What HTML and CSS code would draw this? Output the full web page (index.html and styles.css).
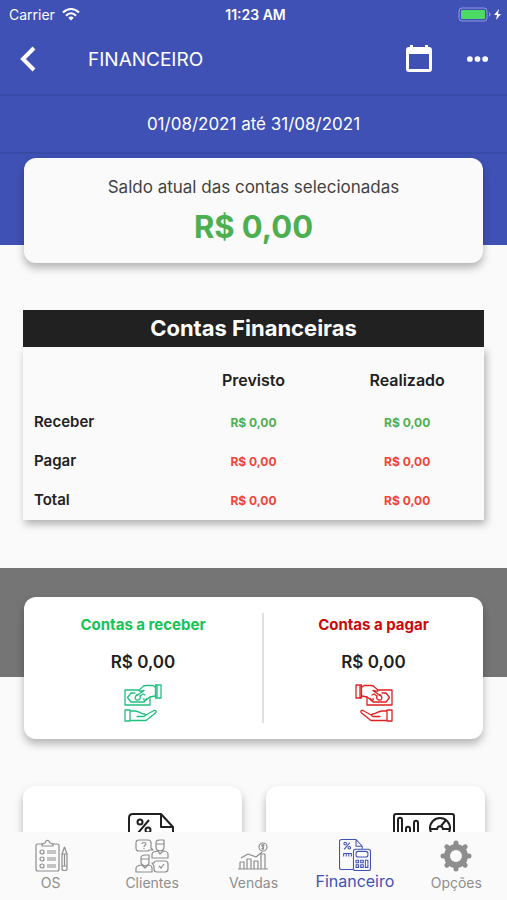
FILE: index.html
```html
<!DOCTYPE html>
<html lang="pt-BR">
<head>
    <meta charset="UTF-8">
    <meta name="viewport" content="width=device-width, initial-scale=1.0">
    <title>Financeiro</title>
    <link rel="stylesheet" href="styles.css">
</head>
<body>
    <!-- Shared icon shapes -->
    <svg class="icon-defs" aria-hidden="true">
        <symbol id="iconMoneyHands" viewBox="0 0 40 40">
            <g fill="none" stroke="currentColor" stroke-width="1.3" stroke-linejoin="round" stroke-linecap="round">
                <path d="M16 7H2v15h25v-8"/>
                <path d="M12 10H8L4.500 14.500 8 19h13l3-3.500M15 11.500c-3 .5-4 5-1 5.500 3 .5 4-2 3-4"/>
                <path d="M14 12.500l7-5c-2 0-4 1-5 .5 0-1.500 1.500-2.500 3-3.500 1-1.500 2-2 4-2h7l2 1.500M32 13l-5 1-4 3c-1 1-3 0-2-1.500M17 13l3-2 2 1"/>
                <path d="M32.500 2H38v13h-5.500zM34 2v13"/>
                <path d="M2 27h5v11H2zM7 28h5c4 0 6 3 9 3 2 0 2 2 0 2.500h-7M22 32.500l9-5c2-.500 3 1 1.500 2.500L23 37.500H7"/>
            </g>
        </symbol>
        <symbol id="iconInvoice" viewBox="0 0 62 62">
            <g fill="none" stroke="currentColor" stroke-width="2" stroke-linejoin="round">
                <path d="M28 59H5c-2 0-4-1-4-4V5c0-3 2-4 4-4h28l12 13v5M33 1v13h12"/>
                <circle cx="12" cy="9" r="2.500"/>
                <circle cx="20" cy="17" r="2.500"/>
                <path d="M21 7L10 20M9 34v-6h15v6M14 28v6M19 28v6"/>
                <rect x="28" y="20" width="33" height="41" rx="4"/>
                <rect x="33" y="24" width="23" height="11" rx="4"/>
                <path d="M33 41h5v5h-5zM42 41h5v5h-5zM51 41h5v14h-5zM33 50h5v5h-5zM42 50h5v5h-5z"/>
            </g>
        </symbol>
    </svg>

    <div class="app">
        <header>
            <div class="status-bar">
                <span class="carrier">Carrier
                    <svg width="18" height="13" viewBox="0 0 18 13" fill="none" stroke="currentColor" stroke-width="2.200">
                        <path d="M1 4.500c5-4.500 11-4.500 16 0M4 7.700c3-3 7-3 10 0"/>
                        <path d="M6.300 9.700c1.600-1.500 3.800-1.500 5.400 0L9 12.500z" fill="currentColor" stroke="none"/>
                    </svg>
                </span>
                <span class="clock">11:23 AM</span>
                <span class="battery">
                    <svg width="44" height="15" viewBox="0 0 44 15">
                        <rect x="1" y="1" width="28" height="13" rx="3" fill="none" stroke="#8f9bdc"/>
                        <rect x="3" y="3" width="24" height="9" rx="1" fill="#4cd964"/>
                        <path d="M31 5c2 1 2 4 0 5z" fill="#8f9bdc"/>
                        <path d="M41 2l-5 6h3l-1 5 5-6h-3z" fill="#fff"/>
                    </svg>
                </span>
            </div>

            <div class="app-bar">
                <button type="button" class="icon-button" aria-label="Voltar">
                    <svg width="16" height="26" viewBox="0 0 16 26" fill="none" stroke="currentColor" stroke-width="4">
                        <path d="M14 2L3 13l11 11"/>
                    </svg>
                </button>
                <h1>FINANCEIRO</h1>
                <button type="button" class="icon-button" aria-label="Calendário">
                    <svg width="26" height="28" viewBox="0 0 26 28" fill="currentColor">
                        <path fill-rule="evenodd" d="M4 0h3v2h12V0h3v2h1a3 3 0 0 1 3 3v19a3 3 0 0 1-3 3H3a3 3 0 0 1-3-3V5a3 3 0 0 1 3-3h1zM3 9v15h20V9z"/>
                    </svg>
                </button>
                <button type="button" class="icon-button" aria-label="Mais opções">
                    <svg width="21" height="6" viewBox="0 0 22 6" fill="currentColor">
                        <circle cx="3" cy="3" r="3"/>
                        <circle cx="11" cy="3" r="3"/>
                        <circle cx="19" cy="3" r="3"/>
                    </svg>
                </button>
            </div>

            <div class="period">01/08/2021 até 31/08/2021</div>
        </header>

        <main>
            <!-- Current balance -->
            <section class="balance">
                <div class="card balance-card">
                    <p>Saldo atual das contas selecionadas</p>
                    <strong>R$ 0,00</strong>
                </div>
            </section>

            <!-- Accounts table -->
            <table class="accounts">
                <caption>Contas Financeiras</caption>
                <thead>
                    <tr>
                        <td></td>
                        <th scope="col">Previsto</th>
                        <th scope="col">Realizado</th>
                    </tr>
                </thead>
                <tbody>
                    <tr>
                        <th scope="row">Receber</th>
                        <td class="positive">R$ 0,00</td>
                        <td class="positive">R$ 0,00</td>
                    </tr>
                    <tr>
                        <th scope="row">Pagar</th>
                        <td class="negative">R$ 0,00</td>
                        <td class="negative">R$ 0,00</td>
                    </tr>
                    <tr>
                        <th scope="row">Total</th>
                        <td class="negative">R$ 0,00</td>
                        <td class="negative">R$ 0,00</td>
                    </tr>
                </tbody>
            </table>

            <!-- Receivable / payable -->
            <section class="bills">
                <div class="card bills-card">
                    <div class="bill receive">
                        <h2>Contas a receber</h2>
                        <p>R$ 0,00</p>
                        <svg width="40" height="40"><use href="#iconMoneyHands"/></svg>
                    </div>
                    <div class="bill pay">
                        <h2>Contas a pagar</h2>
                        <p>R$ 0,00</p>
                        <svg class="mirrored" width="40" height="40"><use href="#iconMoneyHands"/></svg>
                    </div>
                </div>
            </section>

            <section class="shortcuts">
                <button type="button" class="card shortcut" aria-label="Lançamentos">
                    <svg width="62" height="62"><use href="#iconInvoice"/></svg>
                </button>
                <button type="button" class="card shortcut shortcut-end" aria-label="Relatórios">
                    <svg width="62" height="62" viewBox="0 0 62 62" fill="none" stroke="currentColor" stroke-width="2">
                        <rect x="1" y="1" width="60" height="44" rx="2"/>
                        <path d="M5 34V7c0-3 4-3 4 0v27M13 34V16c0-3 4-3 4 0v18M21 34V10c0-3 4-3 4 0v24M24 45v12M38 45v12M16 58h30"/>
                        <circle cx="47" cy="15" r="10"/>
                        <path d="M37 16h7M50 16h7M48 13l5-6"/>
                        <path d="M44 17c0-5 6-5 6 0"/>
                    </svg>
                </button>
            </section>
        </main>

        <nav>
            <a href="#os">
                <svg width="34" height="34" viewBox="0 0 34 34" fill="none" stroke="currentColor" stroke-width="1.200" stroke-linejoin="round">
                    <path d="M9 5H4c-1.500 0-2 1-2 2v23c0 1 .5 2 2 2h19c1.500 0 2-1 2-2V7c0-1-.5-2-2-2h-5"/>
                    <path d="M8 7V5l3-1c1-3.500 4-3.500 5 0l3 1v2z"/>
                    <circle cx="8" cy="13" r="2"/>
                    <circle cx="8" cy="20" r="2"/>
                    <circle cx="8" cy="27" r="2"/>
                    <path d="M13 12h9M13 14h9M13 19h9M13 21h9M13 26h9M13 28h9"/>
                    <path d="M28 15l2.500-7 2.500 7v15c0 2-5 2-5 0zM28 15h5M28 27h5M30.500 15v12"/>
                </svg>
                OS
            </a>
            <a href="#clientes">
                <svg width="34" height="34" viewBox="0 0 34 34" fill="none" stroke="currentColor" stroke-width="1.200" stroke-linejoin="round">
                    <path d="M4 1h9c2 0 3 1 3 3v5l2 2h-4l-1 1H4c-2 0-3-1-3-3V4c0-2 1-3 3-3z"/>
                    <path d="M7 5c0-2 4-2 4 0 0 1-2 1-2 3M9 9v1"/>
                    <path d="M21 8V4c0-3 2-3 4-3h4v7c0 5-8 5-8 0zM21 5h8M17 19v-4c0-2 4-3 6-3l2 3 3-3c2 0 5 1 5 3v4z"/>
                    <path d="M6 23v-4c0-3 2-3 4-3h4v7c0 5-8 5-8 0zM6 20h8M1 33v-4c0-2 4-3 6-3l3 3 3-3c2 0 4 1 4 3v4z"/>
                    <path d="M22 22h8c2 0 3 1 3 3v5c0 2-1 3-3 3h-8c-2 0-3-1-3-3v-3l-2-3h2c0-1 1-2 3-2zM24 27l2 2 3-4"/>
                </svg>
                Clientes
            </a>
            <a href="#vendas">
                <svg width="34" height="34" viewBox="0 0 34 34" fill="none" stroke="currentColor" stroke-width="1.200" stroke-linejoin="round">
                    <path d="M2 30h30M4 30v-7h4v7M11 30V20h4v10M18 30v-8h4v8M25 30V15h4v15M5 19l7-4 8 3 6-5"/>
                    <circle cx="27" cy="8" r="4"/>
                    <path d="M28.500 6.500c-2-1.500-3.500 0-2 1s2 2.500-1 2M27 5v6"/>
                </svg>
                Vendas
            </a>
            <a href="#financeiro" class="active" aria-current="page">
                <svg width="32" height="32"><use href="#iconInvoice"/></svg>
                Financeiro
            </a>
            <a href="#opcoes">
                <svg width="34" height="34" viewBox="0 0 34 34" fill="none" stroke="currentColor">
                    <circle cx="17" cy="17" r="9" stroke-width="6"/>
                    <path d="M17 4v3M17 27v3M4 17h3M27 17h3M7.800 7.800l3 3M23.200 23.200l3 3M7.800 26.200l3-3M23.200 10.800l3-3" stroke-width="5" stroke-linecap="round"/>
                </svg>
                Opções
            </a>
        </nav>
    </div>
</body>
</html>
```

FILE: styles.css
```css
* {
    box-sizing: border-box;
}

body {
    font-family: Inter, "Liberation Sans", sans-serif;
    margin: 0;
    color: #212121;
    background-color: #fafafa;
}

h1, h2, p {
    margin: 0;
}

button {
    font: inherit;
    color: inherit;
    border: none;
    background: none;
    padding: 0;
    cursor: pointer;
}

svg {
    display: block;
}

.icon-defs {
    position: absolute;
    width: 0;
    height: 0;
}

.app {
    display: flex;
    flex-direction: column;
    height: 100vh;
}

/* Header */
header {
    background-color: #3f51b5;
    color: white;
    flex: none;
}

.status-bar {
    display: grid;
    grid-template-columns: 1fr auto 1fr;
    align-items: center;
    height: 28px;
    padding: 0 5px 0 9px;
    font-size: 14px;
}

.carrier {
    display: flex;
    align-items: center;
    gap: 7px;
}

.clock {
    font-weight: 600;
}

.battery {
    justify-self: end;
}

.app-bar {
    display: flex;
    align-items: center;
    height: 68px;
    padding: 0 19px 4px 20px;
    border-bottom: 2px solid #394aa6;
}

.app-bar h1 {
    flex: 1;
    padding-left: 52px;
    font-size: 19px;
    font-weight: 400;
}

.icon-button + .icon-button {
    margin-left: 35px;
}

.period {
    padding: 16px 0;
    font-size: 17px;
    line-height: 24px;
    text-align: center;
    border-bottom: 2px solid #394aa6;
}

main {
    flex: 1;
    overflow-y: auto;
    scrollbar-width: none;
}

.card {
    border-radius: 12px;
    box-shadow: 0 5px 8px rgba(0, 0, 0, 0.28);
}

/* Balance: the blue band ends behind the card */
.balance {
    padding: 4px 24px 0;
    background: linear-gradient(#3f51b5, #3f51b5) no-repeat top / 100% calc(100% - 18px);
}

.balance-card {
    padding: 18px 12px 16px;
    text-align: center;
    background-color: #fafafa;
}

.balance-card p {
    font-size: 17px;
    line-height: 22px;
    color: #424242;
}

.balance-card strong {
    display: block;
    margin-top: 8px;
    font-size: 31px;
    line-height: 41px;
    color: #4caf50;
}

/* Accounts table */
.accounts {
    width: calc(100% - 46px);
    margin: 47px 23px 48px;
    table-layout: fixed;
    border-collapse: collapse;
    box-shadow: 2px 4px 8px rgba(0, 0, 0, 0.3);
}

.accounts caption {
    font-size: 22px;
    font-weight: 700;
    line-height: 37px;
    color: white;
    background-color: #212121;
}

.accounts th,
.accounts td {
    height: 39px;
    padding: 0;
    font-size: 16px;
    font-weight: 600;
    text-align: center;
}

.accounts thead th,
.accounts thead td {
    height: 56px;
    padding-top: 10px;
}

.accounts tbody th {
    padding: 0 0 2px 11px;
    font-size: 15px;
    text-align: left;
}

.accounts tbody td {
    font-size: 12px;
    font-weight: 700;
}

.accounts .positive {
    color: #4caf50;
}

.accounts .negative {
    color: #f44336;
}

/* Receivable / payable */
.bills {
    padding: 29px 24px 0;
    background: linear-gradient(#757575, #757575) no-repeat top / 100% calc(100% - 62px);
}

.bills-card {
    display: grid;
    grid-template-columns: 14fr 13fr;
    padding: 16px 0;
    background-color: white;
}

.bill {
    display: flex;
    flex-direction: column;
    align-items: center;
    height: 110px;
}

.bill + .bill {
    border-left: 2px solid #e0e0e0;
}

.bill h2 {
    font-size: 15px;
    font-weight: 700;
    line-height: 24px;
}

.bill p {
    margin: 13px 0 9px;
    font-size: 17px;
    font-weight: 600;
    line-height: 24px;
}

.receive h2 {
    color: #13c456;
}

.receive svg {
    color: #20c080;
}

.pay h2 {
    color: #c90a0a;
}

.pay svg {
    color: #e02020;
}

.mirrored {
    transform: scaleX(-1);
}

/* Shortcuts */
.shortcuts {
    display: grid;
    grid-template-columns: 1fr 1fr;
    gap: 24px;
    padding: 47px 22px 24px 23px;
}

.shortcut {
    display: flex;
    justify-content: flex-end;
    height: 140px;
    padding: 27px 52px 0 0;
    background-color: white;
}

.shortcut-end {
    padding-right: 30px;
}

/* Bottom navigation */
nav {
    display: grid;
    grid-template-columns: repeat(5, 1fr);
    flex: none;
    height: 68px;
    padding-top: 7px;
    background-color: #fafafa;
}

nav a {
    display: flex;
    flex-direction: column;
    align-items: center;
    font-size: 14px;
    line-height: 20px;
    color: #8e8e8e;
    text-decoration: none;
}

nav .active {
    font-size: 16px;
    color: #3f51b5;
}
```
